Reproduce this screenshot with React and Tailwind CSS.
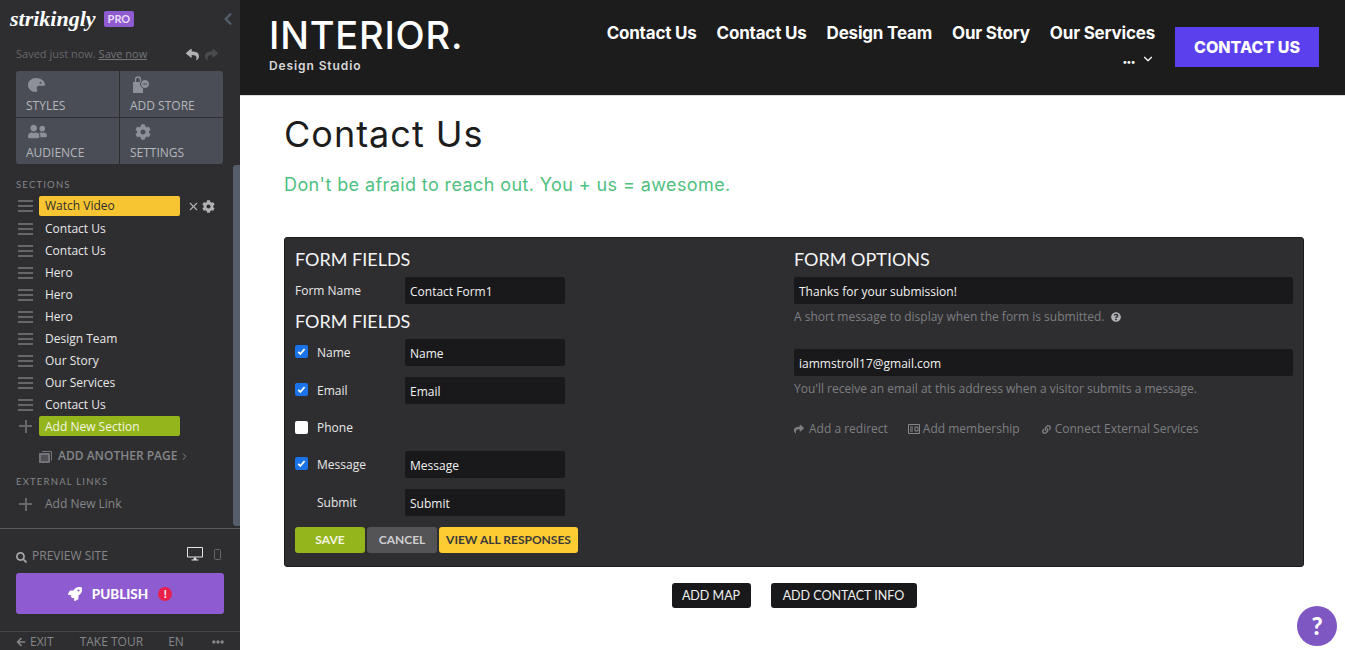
import { FaArrowLeft, FaChevronLeft, FaCog, FaEllipsisH, FaLink, FaQuestionCircle, FaReply, FaRocket, FaSearch, FaShare, FaUserFriends } from "react-icons/fa";
import { FiChevronDown, FiChevronRight, FiX } from "react-icons/fi";

const sections = ["Contact Us", "Contact Us", "Hero", "Hero", "Hero", "Design Team", "Our Story", "Our Services", "Contact Us"];
const navItems = ["Contact Us", "Contact Us", "Design Team", "Our Story", "Our Services"];

function Burger() {
  return (
    <span className="flex w-[15px] shrink-0 flex-col gap-[3px]">
      <span className="h-[2px] bg-[#66676b]" />
      <span className="h-[2px] bg-[#66676b]" />
      <span className="h-[2px] bg-[#66676b]" />
    </span>
  );
}

function Plus() {
  return (
    <span className="relative block h-[13px] w-[13px] shrink-0">
      <span className="absolute left-0 top-[5.5px] h-[2px] w-[13px] bg-[#66676b]" />
      <span className="absolute left-[5.5px] top-0 h-[13px] w-[2px] bg-[#66676b]" />
    </span>
  );
}

function PaletteIcon() {
  return (
    <svg width="18" height="14" viewBox="0 0 18 14" fill="#8d9097">
      <path d="M8 0c5 0 9 3 9 6.5 0 .8-.5 1.3-1.3 1.3H11c-1.5 0-2.3 1-2.3 2.2 0 1.2.6 1.6.6 2.5 0 .9-.6 1.5-1.5 1.500C3.5 14 0 11 0 7s3.500-7 8-7z" />
      <circle cx="12.5" cy="4.8" r="1" fill="#4a4d56" />
    </svg>
  );
}

function StoreIcon() {
  return (
    <svg width="18" height="18" viewBox="0 0 18 18" fill="#8d9097">
      <path d="M1 6h10v11H1z" />
      <path d="M3.5 6V3.5a2.5 2.5 0 0 1 5 0V6" fill="none" stroke="#8d9097" strokeWidth="1.3" />
      <circle cx="13" cy="8" r="4.5" stroke="#4a4d56" />
      <path d="M11 7.5h4v1h-4z" fill="#4a4d56" />
    </svg>
  );
}

function PagesIcon() {
  return (
    <svg width="13" height="13" viewBox="0 0 13 13" fill="none" stroke="#74757a">
      <path d="M3 1.5h9.5v9" />
      <path fill="#74757a" d="M.5 3.5h10v9H.5z" />
      <path d="M2 6h7M2 8h7M2 10h7" stroke="#2e2e30" />
    </svg>
  );
}

function MemberIcon() {
  return (
    <svg width="12" height="10" viewBox="0 0 12 10" fill="none" stroke="#85868a" className="mr-[3px]">
      <path d="M.5.5h11v9H.5z" />
      <path d="M2 3h3M2 5h3M2 7h3M7 3h3v4H7z" />
    </svg>
  );
}

function DesktopIcon() {
  return (
    <svg width="16" height="14" viewBox="0 0 16 14" fill="none" stroke="#e2e3e4" className="ml-auto mb-[4px]">
      <path d="M.5.5h15V10H.5z" />
      <path d="M7 10.500h2l.5 2h2v1h-7v-1h2z" fill="#e2e3e4" stroke="none" />
    </svg>
  );
}

function PhoneIcon() {
  return (
    <svg width="7" height="11" viewBox="0 0 7 11" fill="none" stroke="#66676b" className="ml-[11px] mr-[3px] mb-[5px]">
      <rect x=".5" y=".5" width="6" height="10" rx="1" />
    </svg>
  );
}

function ToolTile({ icon, label }) {
  return (
    <div className="flex h-[46px] flex-col bg-[#4a4d56] pl-[10px]">
      <span className="flex h-[25px] shrink-0 items-center pl-[2px] pt-[2px]">{icon}</span>
      <span className="font-['Open_Sans',sans-serif] text-[12px] leading-[20px] text-[#b5b7bc]">{label}</span>
    </div>
  );
}

function Sidebar() {
  return (
    <aside className="flex h-[650px] w-[240px] shrink-0 flex-col bg-[#2e2e30] font-['Open_Sans',sans-serif]">
      <div className="relative h-[529px] shrink-0 border-b border-[#5a5b5e] pl-[16px]">
        <div className="absolute bottom-[2px] right-0 top-[165px] w-[7px] rounded-l-[3px] bg-[#565d6b]" />
        <div className="flex h-[38px] items-center pr-[5px]">
          <span className="-ml-[6px] font-['Liberation_Serif',serif] text-[22px] font-bold italic leading-none text-white">strikingly</span>
          <span className="ml-[8px] rounded-[2px] bg-[#8f5bd1] px-[4px] font-['Lato',sans-serif] text-[11px] font-bold leading-[16px] text-[#e9ddf7]">PRO</span>
          <FaChevronLeft className="ml-auto text-[14px] text-[#565d6b]" />
        </div>
        <div className="mt-[7px] flex h-[18px] items-center pr-[22px] text-[11px] text-[#66676b]">
          <span>Saved just now.&nbsp;</span>
          <span className="text-[#74757a] underline">Save now</span>
          <FaReply className="ml-auto text-[13px] text-[#b0b2b6]" />
          <FaShare className="ml-[6px] text-[13px] text-[#4a4b4e]" />
        </div>
        <div className="mt-[8px] grid w-[207px] grid-cols-[103px_103px] gap-[1px] overflow-hidden rounded-[3px]">
          <ToolTile icon={<PaletteIcon />} label="STYLES" />
          <ToolTile icon={<StoreIcon />} label="ADD STORE" />
          <ToolTile icon={<FaUserFriends className="text-[19px] text-[#8d9097]" />} label="AUDIENCE" />
          <ToolTile icon={<FaCog className="ml-[3px] text-[16px] text-[#8d9097]" />} label="SETTINGS" />
        </div>
        <div className="mt-[15px] font-['Lato',sans-serif] text-[9.5px] leading-[12px] tracking-[1.2px] text-[#85868a]">SECTIONS</div>
        <div className="mt-[5px] flex h-[20px] items-center pl-[2px]">
          <Burger />
          <div className="ml-[6px] flex h-[20px] w-[141px] items-center rounded-[2px] bg-[#f7c531] pl-[6px] text-[12px] text-[#2e2e30]">Watch Video</div>
          <FiX className="ml-[7px] text-[13px] text-[#b0b2b6]" />
          <FaCog className="ml-[2px] text-[13px] text-[#b0b2b6]" />
        </div>
        {sections.map((name, i) => (
          <div key={i} className={`flex h-[20px] items-center pl-[2px] ${i === 0 ? "mt-[3px]" : "mt-[2px]"}`}>
            <Burger />
            <span className="ml-[12px] text-[12px] text-[#e8e8e9]">{name}</span>
          </div>
        ))}
        <div className="mt-[1px] flex h-[20px] items-center pl-[3px]">
          <Plus />
          <div className="ml-[7px] flex h-[20px] w-[141px] items-center rounded-[2px] bg-[#95b51c] pl-[6px] pt-[1px] text-[12px] text-[#f3f6e3]">Add New Section</div>
        </div>
        <div className="mt-[11px] flex h-[18px] items-center pl-[23px] text-[12px] font-semibold text-[#85868a]">
          <PagesIcon />
          <span className="ml-[6px]">ADD ANOTHER PAGE</span>
          <FiChevronRight className="ml-[2px] text-[11px]" />
        </div>
        <div className="mt-[11px] font-['Lato',sans-serif] text-[9.5px] leading-[12px] tracking-[1.2px] text-[#85868a]">EXTERNAL LINKS</div>
        <div className="mt-[6px] flex h-[20px] items-center pl-[3px]">
          <Plus />
          <span className="ml-[13px] text-[12px] text-[#85868a]">Add New Link</span>
        </div>
      </div>
      <div className="flex h-[44px] shrink-0 items-end px-[16px] pb-[8px] text-[12px] text-[#85868a]">
        <FaSearch className="mb-[2px] text-[11px] text-[#a4a5a9]" />
        <span className="ml-[5px]">PREVIEW SITE</span>
        <DesktopIcon />
        <PhoneIcon />
      </div>
      <div className="mx-[16px] flex h-[41px] shrink-0 items-center justify-center rounded-[3px] bg-[#8f5bd1] pt-[1px] font-['Lato',sans-serif] text-[13.5px] font-black text-white">
        <FaRocket className="text-[14px]" />
        <span className="ml-[10px]">PUBLISH</span>
        <span className="ml-[10px] flex h-[14px] w-[14px] items-center justify-center rounded-full bg-[#e8214a] text-[11px] font-bold">!</span>
      </div>
      <div className="mt-[17px] flex h-[19px] items-end justify-between border-t border-[#444548] px-[16px] text-[12px] leading-[16px] text-[#85868a]">
        <span className="flex items-center"><FaArrowLeft className="mr-[4px] text-[10px]" />EXIT</span>
        <span className="-ml-[2px]">TAKE TOUR</span>
        <span className="-ml-[3px]">EN</span>
        <FaEllipsisH className="mb-[2px] text-[12px]" />
      </div>
    </aside>
  );
}

function Header() {
  return (
    <header className="flex h-[96px] shrink-0 border-b border-[#dddddd] bg-[#1c1c1c] pl-[29px] pr-[26px] text-white">
      <div className="w-[200px] shrink-0 font-['Inter',sans-serif]">
        <div className="mt-[14px] text-[38px] font-medium leading-[42px] tracking-[0.8px]">INTERIOR.</div>
        <div className="mt-[3px] text-[12px] font-semibold leading-[14px] tracking-[0.9px] text-[#d8d8d8]">Design Studio</div>
      </div>
      <nav className="ml-auto flex flex-col items-end pt-[22px] font-['Inter',sans-serif] text-[17px] font-bold leading-[22px] tracking-[-0.2px]">
        <div className="flex gap-[20px]">
          {navItems.map((item, i) => (
            <span key={i}>{item}</span>
          ))}
        </div>
        <div className="mt-[8px] flex h-[14px] items-center gap-[6px]">
          <span className="pt-[5px] text-[9px] leading-none">•••</span>
          <FiChevronDown className="text-[14px]" />
        </div>
      </nav>
      <div className="ml-[20px] mt-[27px] flex h-[40px] w-[144px] items-center justify-center bg-[#5b41ee] pb-[1px] font-['Inter',sans-serif] text-[16px] font-extrabold">CONTACT US</div>
    </header>
  );
}

function FieldInput({ value, className = "w-[160px]" }) {
  return (
    <div className={`flex h-[27px] items-center rounded-[2px] bg-[#19191b] pl-[5px] pt-[2px] text-[12px] text-[#f2f2f2] ${className}`}>
      {value}
    </div>
  );
}

function Check({ checked }) {
  if (!checked) return <span className="h-[13px] w-[13px] rounded-[2px] bg-white" />;
  return (
    <span className="flex h-[13px] w-[13px] items-center justify-center rounded-[2px] bg-[#1a73e8]">
      <svg width="9" height="9" viewBox="0 0 9 9" fill="none" stroke="#fff" strokeWidth="1.8">
        <path d="M1.2 4.8l2.2 2.2 4.2-5" />
      </svg>
    </span>
  );
}

function FieldRow({ label, checked, value, hasBox = true, className = "h-[27px]" }) {
  return (
    <div className={`flex items-center ${className}`}>
      <span className="flex w-[22px] shrink-0 pb-[2px]">{hasBox && <Check checked={checked} />}</span>
      <span className="w-[88px] shrink-0 text-[12px] text-[#e8e8e9]">{label}</span>
      {value && <FieldInput value={value} />}
    </div>
  );
}

function FormPanel() {
  const heading = "font-['Lato',sans-serif] text-[18px] leading-[22px] text-[#f5f5f5]";
  return (
    <section className="mt-[40px] flex h-[330px] w-[1020px] rounded-[3px] border border-[#1c1c1c] bg-[#2e2e30] pl-[10px] pt-[10px] font-['Open_Sans',sans-serif]">
      <div className="w-[499px] shrink-0">
        <h3 className={heading}>FORM FIELDS</h3>
        <div className="mt-[7px] flex items-center">
          <span className="w-[110px] text-[12px] text-[#e8e8e9]">Form Name</span>
          <FieldInput value="Contact Form1" />
        </div>
        <h3 className={`mt-[6px] ${heading}`}>FORM FIELDS</h3>
        <div className="mt-[7px] flex flex-col gap-[11px]">
          <FieldRow label="Name" checked value="Name" />
          <FieldRow label="Email" checked value="Email" />
          <FieldRow label="Phone" className="h-[25px] pt-[1px]" />
          <FieldRow label="Message" checked value="Message" />
          <FieldRow label="Submit" hasBox={false} value="Submit" />
        </div>
        <div className="mt-[11px] flex gap-[2px] font-['Lato',sans-serif] text-[12px] font-bold">
          <span className="flex h-[26px] w-[70px] items-center justify-center rounded-[3px] bg-[#95b51c] text-[#f3f6e3]">SAVE</span>
          <span className="flex h-[26px] w-[70px] items-center justify-center rounded-[3px] bg-[#545456] text-[#cfcfd0]">CANCEL</span>
          <span className="flex h-[26px] w-[139px] items-center justify-center rounded-[3px] bg-[#fdcb32] text-[#3a3a3a]">VIEW ALL RESPONSES</span>
        </div>
      </div>
      <div className="w-[499px] shrink-0">
        <h3 className={heading}>FORM OPTIONS</h3>
        <FieldInput value="Thanks for your submission!" className="mt-[7px] w-[499px]" />
        <p className="mt-[4px] flex h-[18px] items-center text-[12px] text-[#7d7e82]">
          A short message to display when the form is submitted.
          <FaQuestionCircle className="ml-[7px] text-[10px] text-[#b0b2b6]" />
        </p>
        <FieldInput value="iammstroll17@gmail.com" className="mt-[23px] w-[499px]" />
        <p className="mt-[4px] flex h-[18px] items-center text-[12px] text-[#7d7e82]">
          You'll receive an email at this address when a visitor submits a message.
        </p>
        <div className="mt-[21px] flex h-[20px] items-center text-[12px] text-[#7d7e82]">
          <FaShare className="mr-[5px] text-[10px]" />
          <span>Add a redirect</span>
          <span className="ml-[20px] flex items-center"><MemberIcon />Add membership</span>
          <span className="ml-[22px] flex items-center"><FaLink className="mr-[4px] text-[9px]" />Connect External Services</span>
        </div>
      </div>
    </section>
  );
}

export default function App() {
  return (
    <div className="relative flex h-[650px] w-[1345px] overflow-hidden bg-white">
      <Sidebar />
      <main className="flex min-w-0 flex-1 flex-col">
        <Header />
        <div className="pl-[44px]">
          <h1 className="mt-[15px] font-['Inter',sans-serif] text-[36px] font-normal leading-[46px] tracking-[1px] text-[#1c1c1c]">Contact Us</h1>
          <p className="mt-[16px] font-['Inter',sans-serif] text-[18px] leading-[24px] tracking-[0.4px] text-[#4fc07f]">Don't be afraid to reach out. You + us = awesome.</p>
          <FormPanel />
          <div className="mt-[16px] flex w-[1020px] justify-center gap-[20px] font-['Lato',sans-serif] text-[12.5px] text-[#f0f0f0]">
            <span className="flex h-[25px] w-[79px] items-center justify-center rounded-[3px] bg-[#19191b] pt-[1px]">ADD MAP</span>
            <span className="flex h-[25px] w-[146px] items-center justify-center rounded-[3px] bg-[#19191b] pt-[1px]">ADD CONTACT INFO</span>
          </div>
        </div>
      </main>
      <div className="absolute bottom-[4px] right-[8px] flex h-[40px] w-[40px] items-center justify-center rounded-full bg-[#7e57c2] font-['Lato',sans-serif] text-[24px] font-black text-white">?</div>
    </div>
  );
}
